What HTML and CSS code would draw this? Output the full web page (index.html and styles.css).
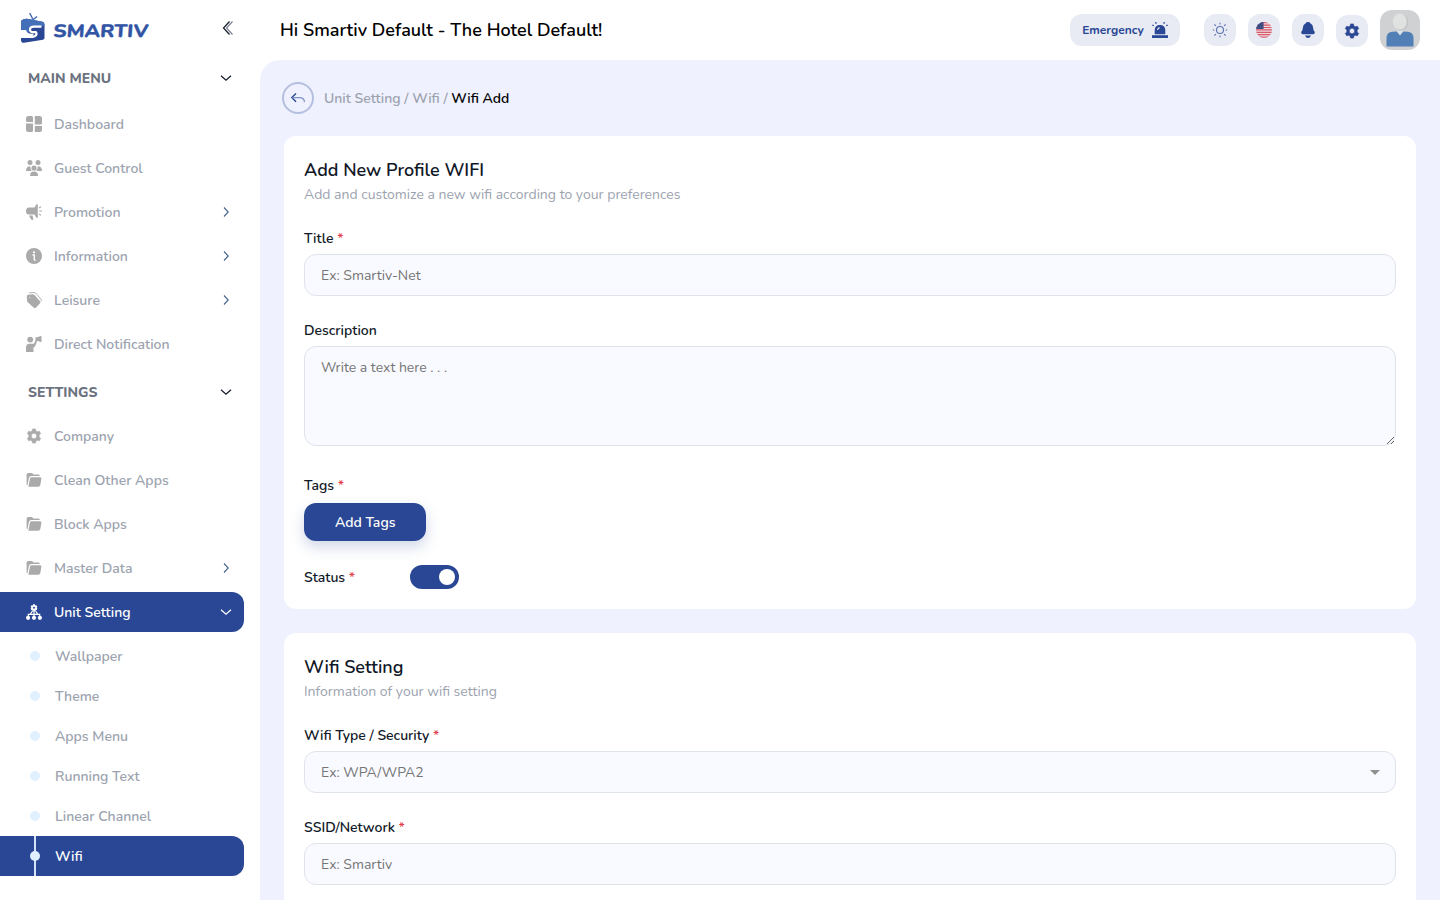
FILE: index.html
```html
<!DOCTYPE html>
<html lang="en">
<head>
<meta charset="utf-8">
<title>Smartiv - Wifi Add</title>
<link rel="stylesheet" href="styles.css">
</head>
<body>
<svg class="defs" aria-hidden="true">
  <symbol id="right" viewBox="0 0 16 16"><path d="M6 3.500 10.200 8 6 12.500" fill="none" stroke="#46628f" stroke-width="1.100"/></symbol>
  <symbol id="down" viewBox="0 0 16 16"><path d="M3 5.800 8 10.300 13 5.800" fill="none" stroke="currentColor" stroke-width="1.200"/></symbol>
  <symbol id="gear" viewBox="0 0 16 16"><path fill-rule="evenodd" d="M6.600.9h2.800l.5 2.100 1.400.8 2-.6 1.400 2.400-1.500 1.500v1.800l1.500 1.500-1.400 2.400-2-.6-1.400.8-.5 2.100H6.600L6.100 13l-1.400-.8-2 .6-1.400-2.400 1.500-1.500V7.100L1.300 5.600l1.400-2.400 2 .6L6.100 3zM8 5.300a2.700 2.700 0 1 0 0 5.400 2.700 2.700 0 0 0 0-5.400z" stroke="currentColor" stroke-width=".6" stroke-linejoin="round"/></symbol>
  <symbol id="folder" viewBox="0 0 16 16"><path d="M.6 12.500V2.800Q.6 1 2.400 1h2.800q.8 0 1.400.6l.8.8h4.800q1.700 0 1.700 1.700H5.400q-2 0-2.500 1.900L1.400 13.500z"/><path d="M5.600 5.200h8.600q1.500 0 1.200 1.500l-1.100 6.300q-.3 1.800-2.100 1.800H2.400L4 6.600q.3-1.400 1.600-1.400z"/></symbol>
</svg>
<div class="app">
  <aside class="sidebar">
    <div class="brand">
      <svg class="logo" width="132" height="34" viewBox="0 0 132 34">
        <path d="M13 8.500 9.700 2M13 8.800 17 5.500" fill="none" stroke="#3c68b4" stroke-width="1.400"/>
        <path d="M1 10Q4 7 8.500 8L22.500 10.800Q24.500 11.300 24.500 13.500V27Q24.500 28.300 23 28.800L4 31.800Q1 32 1 29z" fill="#2a4795"/>
        <path d="M1 10Q4 7 8.500 8L22.500 10.800Q24.500 11.300 24.500 13.500V15H13Q9 15 9 18.500V21.500L1 18.500z" fill="#4470b9"/>
        <path d="M21.500 15.700H14Q10 15.700 10 18.500T13.500 21.200H15.500Q16.500 21.200 16.500 23T13 25.800L.5 26" fill="none" stroke="#fff" stroke-width="2.200"/>
        <path d="M.5 19H6Q7 22.500 11.500 22.800H14L12.500 25H.5z" fill="#fff"/>
        <text x="33" y="26" class="wordmark" textLength="95" lengthAdjust="spacingAndGlyphs">SMARTIV</text>
      </svg>
      <svg width="16" height="16" viewBox="0 0 16 16" fill="none"><path d="M9.500 1.500 3.500 8l6 6.500" stroke="#111827" stroke-width="1.200"/><path d="M12.500 1.500 6.500 8l6 6.500" stroke="#7b828e" stroke-width="1.200"/></svg>
    </div>
    <div class="group"><span>MAIN MENU</span><svg><use href="#down"/></svg></div>
    <nav class="menu">
      <a class="item"><svg viewBox="0 0 16 16"><path d="M2.500 0H5.500Q7 0 7 1.500V6H1.500Q0 6 0 4.500V2.500Q0 0 2.500 0zM8.800 0h4.700Q16 0 16 2.500V7q0 1.600-1.600 1.600H8.800zM0 7.400h7v7Q7 16 5.500 16h-3Q0 16 0 13.500zM8.800 10H16v3.500q0 2.500-2.500 2.500H8.800z"/></svg><span>Dashboard</span></a>
      <a class="item"><svg viewBox="0 0 16 16"><circle cx="4" cy="2.600" r="2.500"/><circle cx="12" cy="2.600" r="2.500"/><circle cx="8" cy="8" r="2.600"/><path d="M0 11q0-4.700 4.200-4.700.2 3.700 1.500 4.700zM16 11q0-4.700-4.200-4.700-.2 3.700-1.500 4.700zM4 16q0-4.400 4-4.400T12 16z"/></svg><span>Guest Control</span></a>
      <a class="item"><svg viewBox="0 0 16 16"><path d="M10.300.5q1-1 1.500 0v13q-.5 1-1.500 0L8.500 10.500H3Q0 10.500 0 7T3 3.500h5.500zM3 11.500h3.600l.7 3.800q0 .7-1 .7T4.800 15z"/><path d="M13 4 15 2.800M13.200 7H16M13 10l2 1.200" stroke="currentColor" stroke-width="1.100"/></svg><span>Promotion</span><svg class="chev"><use href="#right"/></svg></a>
      <a class="item"><svg viewBox="0 0 16 16"><circle cx="8" cy="8" r="8"/><circle cx="8" cy="4.300" r="1.100" fill="#fff"/><path d="M6.500 7h1.800v5.300M8.300 12.300h1.300" stroke="#fff" stroke-width="1.400" fill="none"/></svg><span>Information</span><svg class="chev"><use href="#right"/></svg></a>
      <a class="item"><svg viewBox="0 0 16 16"><path d="M.8 4.500q0-1.500 1.500-1.700l4.500-.6q.9 0 1.700.8l5.300 6q1.100 1.300 0 2.500l-3.700 4q-1.200 1-2.500 0L1.800 10.200Q1 9.500 1 8.500z"/><path d="M3.200.9 8 .5q1 0 1.700.7l5.300 6q.8 1.200 0 2.500" fill="none" stroke="currentColor" stroke-width=".9"/><circle cx="3.900" cy="5.400" r=".5" fill="#fff"/></svg><span>Leisure</span><svg class="chev"><use href="#right"/></svg></a>
      <a class="item"><svg viewBox="0 0 16 16"><circle cx="4.200" cy="3.600" r="2.900"/><path d="M0 16v-4.500Q0 7.800 3.500 7.800h4.300l1.900-3.300 1.500.8L9 10.500q-.5.800-1.500.8V16z"/><path d="M9.500 1.300q1.500.2 2.500-.4L14.500.1q1-.3 1 .3v5.300q0 .7-.9.3L12 5H9.500z"/></svg><span>Direct Notification</span></a>
    </nav>
    <div class="group settings"><span>SETTINGS</span><svg><use href="#down"/></svg></div>
    <nav class="menu">
      <a class="item"><svg><use href="#gear"/></svg><span>Company</span></a>
      <a class="item"><svg><use href="#folder"/></svg><span>Clean Other Apps</span></a>
      <a class="item"><svg><use href="#folder"/></svg><span>Block Apps</span></a>
      <a class="item"><svg><use href="#folder"/></svg><span>Master Data</span><svg class="chev"><use href="#right"/></svg></a>
      <a class="item active"><svg viewBox="0 0 16 16"><path fill-rule="evenodd" d="m7.100.2h1.800l.4 1.200 1.200-.2.9 1.500-.8 1 .8 1.100-.9 1.500-1.200-.2-.4 1.200H7.100l-.4-1.200-1.200.2-.9-1.500.8-1.100-.8-1 .9-1.500 1.200.2zM8 2.700a1 1 0 1 0 0 2 1 1 0 0 0 0-2z"/><path d="M8 6v6M2.300 12V10.400h11.400V12M6.800 6.500 4.300 10.200M9.200 6.500l2.500 3.700" fill="none" stroke="currentColor" stroke-width="1.200"/><circle cx="2.100" cy="13.800" r="2.100"/><circle cx="8" cy="13.800" r="2.100"/><circle cx="13.900" cy="13.800" r="2.100"/></svg><span>Unit Setting</span><svg class="chev"><use href="#down"/></svg></a>
    </nav>
    <nav class="sub">
      <a><i></i><span>Wallpaper</span></a>
      <a><i></i><span>Theme</span></a>
      <a><i></i><span>Apps Menu</span></a>
      <a><i></i><span>Running Text</span></a>
      <a><i></i><span>Linear Channel</span></a>
      <a class="active"><i></i><span>Wifi</span></a>
    </nav>
  </aside>
  <div class="content">
    <header class="topbar">
      <h1>Hi Smartiv Default - The Hotel Default!</h1>
      <button class="emergency"><span>Emergency</span><svg width="16" height="16" viewBox="0 0 16 16"><path d="M2.700 12.200V8.500Q2.700 3 8 3t5.300 5.500v3.700z" fill="currentColor"/><path d="M0 13.200h16V16H0z" fill="currentColor"/><path d="M5.500 8Q5.700 6 7.600 5.600" stroke="#e8ebf4" stroke-width="1.100" fill="none"/><path d="m3.500 0 .8 1.700M12.500 0l-.8 1.700M.2 3l1.600.8M15.800 3l-1.600.8" stroke="currentColor" stroke-width="1.200"/></svg></button>
      <button class="tool"><svg width="16" height="16" viewBox="0 0 16 16" fill="none" stroke="#5a73ad" stroke-width="1.100"><circle cx="8" cy="8" r="3.500"/><path d="M8 .8v1.600M8 13.600v1.600M.8 8h1.600M13.600 8h1.600M2.300 2.300l1.600 1.600M12.100 12.100l1.600 1.600M2.300 13.700l1.600-1.600M12.100 3.900l1.600-1.600"/></svg></button>
      <button class="tool"><svg width="16" height="16" viewBox="0 0 16 16"><clipPath id="disc"><circle cx="8" cy="8" r="8"/></clipPath><g clip-path="url(#disc)"><path fill="#f0d9df" d="M0 0h16v16H0z"/><path d="M0 .7h16M0 3.100h16M0 5.500h16M0 7.900h16M0 10.300h16M0 12.700h16M0 15.200h16" stroke="#d65a69" stroke-width="1.200"/><path fill="#34467f" d="M0 0h7.500v7H0z"/><path d="M1 4h6M2 2h5M1 5.800h6" stroke="#8390b5" stroke-width=".6" stroke-dasharray=".6 1"/></g></svg></button>
      <button class="tool"><svg width="16" height="16" viewBox="0 0 16 16" fill="currentColor"><path d="M8 0q2 0 2.300 1.200Q13 2.500 13.200 6l.2 1.500q.3 1 1.100 2 1 2.500-1.600 2.800H3.100Q.5 12 1.500 9.500q.8-1 1.100-2L2.800 6Q3 2.500 5.700 1.200 6 0 8 0zM5 13.500h6Q10 16 8 16t-3-2.500z"/></svg></button>
      <button class="tool gear"><svg width="16" height="16" fill="currentColor"><use href="#gear"/></svg></button>
      <svg class="avatar" width="40" height="40" viewBox="0 0 40 40"><path fill="#d0d1d2" d="M0 0h40v40H0z"/><ellipse cx="21.500" cy="12" rx="6.800" ry="8" fill="#c3c4c5"/><ellipse cx="19.800" cy="11.500" rx="7" ry="8" fill="#e0e1e1"/><path d="M6.500 36.500V28q0-6 6-6.300l4.500-.3 3 3 3-3 4.500.3q6 .3 6 6.300v8.500z" fill="#527fb5"/><path d="m16.500 21 3.500 4.500 3.500-4.500z" fill="#dfe2e5"/></svg>
    </header>
    <main>
      <div class="crumbs">
        <span class="back"><svg width="16" height="16" viewBox="0 0 16 16" fill="none"><path d="M6 3.500 1.800 7.600 6 11.800" stroke="#2a4795" stroke-width="1.400"/><path d="M2 7.600h7.500q4.700 0 5 4.500" stroke="#7f92c3" stroke-width="1.200"/></svg></span>
        <p>Unit Setting / Wifi / <b>Wifi Add</b></p>
      </div>
      <section class="card">
        <h2>Add New Profile WIFI</h2>
        <p class="lead">Add and customize a new wifi according to your preferences</p>
        <label>Title <em>*</em></label>
        <input type="text" placeholder="Ex: Smartiv-Net">
        <label>Description</label>
        <textarea placeholder="Write a text here . . ."></textarea>
        <label>Tags <em>*</em></label>
        <button class="primary">Add Tags</button>
        <div class="status"><label>Status <em>*</em></label><span class="toggle"></span></div>
      </section>
      <section class="card">
        <h2>Wifi Setting</h2>
        <p class="lead">Information of your wifi setting</p>
        <label>Wifi Type / Security <em>*</em></label>
        <div class="select"><span>Ex: WPA/WPA2</span><i></i></div>
        <label>SSID/Network <em>*</em></label>
        <input type="text" placeholder="Ex: Smartiv">
      </section>
    </main>
  </div>
</div>
</body>
</html>
```
FILE: styles.css
```css
* { box-sizing: border-box; }
body { margin: 0; font: 580 14px/20px Nunito, Lato, "Open Sans", sans-serif; color: #111827; background: #fff; }
h1, h2, p { margin: 0; font-weight: 580; }
button { border: 0; padding: 0; font-family: inherit; }
svg { display: block; flex: none; }
.defs { display: none; }
.app { display: flex; height: 900px; overflow: hidden; }

.sidebar { width: 260px; flex: none; }
.brand { height: 58px; padding: 11px 24px 0 20px; display: flex; justify-content: space-between; }
.brand > svg:last-child { margin-top: 9px; }
.wordmark { font: 800 18px Nunito, Lato, sans-serif; fill: #3254a4; stroke: #3254a4; stroke-width: .3; transform: skewX(-4deg); transform-origin: 33px 25px; }
.group { height: 40px; padding: 0 26px 0 28px; display: flex; align-items: center; justify-content: space-between; font-weight: 780; color: #6b7280; }
.group svg { width: 16px; height: 16px; color: #111827; }
.settings { margin-top: 8px; }
.menu { display: flex; flex-direction: column; gap: 4px; padding-top: 6px; }
.settings + .menu { padding-top: 4px; }
.item { height: 40px; width: 244px; padding: 0 10px 0 26px; display: flex; align-items: center; gap: 12px; color: #9ca3af; }
.group span, .item span, .sub span, .crumbs p { padding-top: 2px; }
.item svg { width: 16px; height: 16px; fill: #aaa; color: #aaa; }
.item .chev { margin-left: auto; }
.item.active { background: #2a4795; color: #fff; border-radius: 0 12px 12px 0; }
.item.active svg { fill: #fff; color: #fff; }
.sub { padding-top: 4px; }
.sub a { height: 40px; width: 244px; padding-left: 29.500px; display: flex; align-items: center; gap: 15.500px; color: #9ca3af; }
.sub i { width: 10px; height: 10px; border-radius: 50%; background: #e1f0ff; }
.sub .active { color: #fff; border-radius: 0 12px 12px 0; background: linear-gradient(#d5e3f7, #d5e3f7) 33.500px 0 / 2px 100% no-repeat #2a4795; }

.content { flex: 1; min-width: 0; }
.topbar { height: 60px; padding: 0 20px; display: flex; align-items: center; }
h1 { font-size: 18px; margin-right: auto; color: #000; }
.topbar button { background: #e8ebf4; color: #2a4795; border-radius: 12px; height: 32px; display: flex; align-items: center; justify-content: center; }
.topbar .emergency { width: 110px; gap: 8px; font-size: 12px; font-weight: 700; margin-right: 12px; }
.topbar .tool { width: 32px; margin-left: 12px; }
.topbar .gear { margin-top: 1px; }
.avatar { margin-left: 12px; border-radius: 12px; }
main { height: 840px; background: #eff1fe; border-radius: 20px 0 0; padding: 22px 24px; }
.crumbs { display: flex; align-items: center; gap: 10px; margin: 0 0 22px -2px; color: #9ca3af; }
.crumbs b { font-weight: 580; color: #000; }
.back { width: 32px; height: 32px; border: 2px solid #b4bfdf; border-radius: 50%; display: grid; place-items: center; }
.card { background: #fff; border-radius: 12px; padding: 20px; margin-bottom: 24px; display: flex; flex-direction: column; }
h2 { font-size: 18px; line-height: 28px; }
.lead { font-weight: 400; line-height: 21px; color: #9ca3af; margin-bottom: 24px; }
label em { font-style: normal; color: #e23f4e; }
input, textarea, .select { width: 100%; margin: 5px 0 25px; border: 1px solid #dfe3ea; border-radius: 12px; background: #f9faff; padding: 0 16px; font: 400 14px/20px Nunito, Lato, sans-serif; color: #757575; }
input, .select { height: 42px; }
::placeholder { color: #757575; }
textarea { height: 100px; padding-top: 11px; margin-bottom: 30px; display: block; }
.select { display: flex; align-items: center; justify-content: space-between; }
.select span { padding-top: 1px; }
.select i { border: 5px solid transparent; border-top-color: #909090; border-bottom: 0; margin-right: -1px; }
.primary { margin-top: 7px; width: 122.400px; height: 38.300px; border-radius: 12px; background: #2a4795; color: #fff; font-size: 14px; font-weight: 580; box-shadow: 0 6px 14px rgba(42,71,149,.22); }
.status { display: flex; align-items: center; height: 24px; margin-top: 24px; }
.status label { width: 106.400px; padding-top: 1px; }
.toggle { width: 48.500px; height: 24px; border-radius: 12px; background: #2a4795; padding: 4px; display: flex; justify-content: flex-end; }
.toggle::after { content: ""; width: 16px; height: 16px; border-radius: 50%; background: #fff; }
```
